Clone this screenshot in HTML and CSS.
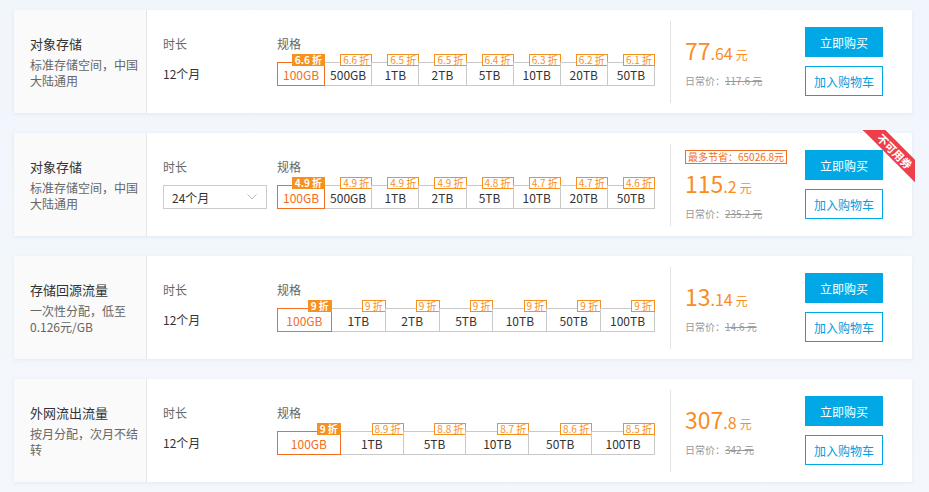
FILE: index.html
```html
<!DOCTYPE html>
<html lang="zh-CN">
<head>
    <meta charset="UTF-8">
    <meta name="viewport" content="width=device-width, initial-scale=1.0">
    <title>存储资源包</title>
    <link rel="stylesheet" href="styles.css">
</head>
<body>

    <div class="list">

        <!-- 对象存储 12个月 -->
        <div class="card">
            <div class="intro">
                <div class="intro-title">对象存储</div>
                <div class="intro-desc">标准存储空间，中国大陆通用</div>
            </div>
            <div class="field duration">
                <div class="field-label">时长</div>
                <div class="duration-value">12个月</div>
            </div>
            <div class="field spec">
                <div class="field-label">规格</div>
                <div class="spec-row">
                    <div class="spec-item active"><span class="tag">6.6 折</span>100GB</div>
                    <div class="spec-item"><span class="tag">6.6 折</span>500GB</div>
                    <div class="spec-item"><span class="tag">6.5 折</span>1TB</div>
                    <div class="spec-item"><span class="tag">6.5 折</span>2TB</div>
                    <div class="spec-item"><span class="tag">6.4 折</span>5TB</div>
                    <div class="spec-item"><span class="tag">6.3 折</span>10TB</div>
                    <div class="spec-item"><span class="tag">6.2 折</span>20TB</div>
                    <div class="spec-item"><span class="tag">6.1 折</span>50TB</div>
                </div>
            </div>
            <div class="price">
                <div class="price-now"><span class="int">77</span><span class="dec">.64</span><span class="unit">元</span></div>
                <div class="price-old">日常价：<s>117.6 元</s></div>
            </div>
            <div class="actions">
                <button class="btn btn-buy">立即购买</button>
                <button class="btn btn-cart">加入购物车</button>
            </div>
        </div>

        <!-- 对象存储 24个月 -->
        <div class="card">
            <div class="intro">
                <div class="intro-title">对象存储</div>
                <div class="intro-desc">标准存储空间，中国大陆通用</div>
            </div>
            <div class="field duration">
                <div class="field-label">时长</div>
                <div class="select">
                    <span>24个月</span>
                    <svg width="10" height="6" viewBox="0 0 10 6"><path d="M0.5 0.5 L5 5 L9.5 0.5" fill="none" stroke="#bbb" stroke-width="1"/></svg>
                </div>
            </div>
            <div class="field spec">
                <div class="field-label">规格</div>
                <div class="spec-row">
                    <div class="spec-item active"><span class="tag">4.9 折</span>100GB</div>
                    <div class="spec-item"><span class="tag">4.9 折</span>500GB</div>
                    <div class="spec-item"><span class="tag">4.9 折</span>1TB</div>
                    <div class="spec-item"><span class="tag">4.9 折</span>2TB</div>
                    <div class="spec-item"><span class="tag">4.8 折</span>5TB</div>
                    <div class="spec-item"><span class="tag">4.7 折</span>10TB</div>
                    <div class="spec-item"><span class="tag">4.7 折</span>20TB</div>
                    <div class="spec-item"><span class="tag">4.6 折</span>50TB</div>
                </div>
            </div>
            <div class="price">
                <div class="save">最多节省：65026.8元</div>
                <div class="price-now"><span class="int">115</span><span class="dec">.2</span><span class="unit">元</span></div>
                <div class="price-old">日常价：<s>235.2 元</s></div>
            </div>
            <div class="actions">
                <button class="btn btn-buy">立即购买</button>
                <button class="btn btn-cart">加入购物车</button>
            </div>
            <div class="ribbon-wrap"><div class="ribbon">不可用券</div></div>
        </div>

        <!-- 存储回源流量 -->
        <div class="card">
            <div class="intro">
                <div class="intro-title">存储回源流量</div>
                <div class="intro-desc">一次性分配，低至0.126元/GB</div>
            </div>
            <div class="field duration">
                <div class="field-label">时长</div>
                <div class="duration-value">12个月</div>
            </div>
            <div class="field spec">
                <div class="field-label">规格</div>
                <div class="spec-row">
                    <div class="spec-item active"><span class="tag">9 折</span>100GB</div>
                    <div class="spec-item"><span class="tag">9 折</span>1TB</div>
                    <div class="spec-item"><span class="tag">9 折</span>2TB</div>
                    <div class="spec-item"><span class="tag">9 折</span>5TB</div>
                    <div class="spec-item"><span class="tag">9 折</span>10TB</div>
                    <div class="spec-item"><span class="tag">9 折</span>50TB</div>
                    <div class="spec-item"><span class="tag">9 折</span>100TB</div>
                </div>
            </div>
            <div class="price">
                <div class="price-now"><span class="int">13</span><span class="dec">.14</span><span class="unit">元</span></div>
                <div class="price-old">日常价：<s>14.6 元</s></div>
            </div>
            <div class="actions">
                <button class="btn btn-buy">立即购买</button>
                <button class="btn btn-cart">加入购物车</button>
            </div>
        </div>

        <!-- 外网流出流量 -->
        <div class="card">
            <div class="intro">
                <div class="intro-title">外网流出流量</div>
                <div class="intro-desc">按月分配，次月不结转</div>
            </div>
            <div class="field duration">
                <div class="field-label">时长</div>
                <div class="duration-value">12个月</div>
            </div>
            <div class="field spec">
                <div class="field-label">规格</div>
                <div class="spec-row">
                    <div class="spec-item active"><span class="tag">9 折</span>100GB</div>
                    <div class="spec-item"><span class="tag">8.9 折</span>1TB</div>
                    <div class="spec-item"><span class="tag">8.8 折</span>5TB</div>
                    <div class="spec-item"><span class="tag">8.7 折</span>10TB</div>
                    <div class="spec-item"><span class="tag">8.6 折</span>50TB</div>
                    <div class="spec-item"><span class="tag">8.5 折</span>100TB</div>
                </div>
            </div>
            <div class="price">
                <div class="price-now"><span class="int">307</span><span class="dec">.8</span><span class="unit">元</span></div>
                <div class="price-old">日常价：<s>342 元</s></div>
            </div>
            <div class="actions">
                <button class="btn btn-buy">立即购买</button>
                <button class="btn btn-cart">加入购物车</button>
            </div>
        </div>

    </div>

</body>
</html>
```

FILE: styles.css
```css
body {
    font-family: "Noto Sans CJK SC", "Noto Sans", sans-serif;
    margin: 0;
    background: linear-gradient(180deg, #f1f6fc 0%, #f4f8fd 100%);
    color: #333;
    min-height: 492px;
}
.list {
    display: flex;
    flex-direction: column;
    gap: 20px;
    padding: 10px 17px 10px 14px;
}
.card {
    position: relative;
    display: flex;
    height: 103px;
    background: #fff;
    box-shadow: 0 1px 4px rgba(40, 70, 120, 0.08);
}
.intro {
    width: 133px;
    flex-shrink: 0;
    box-sizing: border-box;
    padding: 0 8px 0 16px;
    background: #fafafa;
    border-right: 1px solid #e6e6e6;
    display: flex;
    flex-direction: column;
    justify-content: center;
}
.intro-title {
    font-size: 13px;
    line-height: 18px;
    color: #333;
    margin-bottom: 4px;
}
.intro-desc {
    font-size: 12px;
    line-height: 16px;
    color: #666;
}
.field {
    padding-top: 26px;
    flex-shrink: 0;
}
.field-label {
    font-size: 12px;
    line-height: 16px;
    color: #666;
    margin-bottom: 10px;
}
.duration {
    width: 114px;
    margin-left: 16px;
}
.duration-value {
    font-size: 12px;
    line-height: 24px;
    color: #333;
}
.select {
    width: 104px;
    height: 24px;
    box-sizing: border-box;
    border: 1px solid #ccc;
    display: flex;
    align-items: center;
    justify-content: space-between;
    padding: 0 9px 0 8px;
    font-size: 12px;
    color: #333;
}
.spec {
    width: 378px;
}
.spec-row {
    display: flex;
}
.spec-item {
    position: relative;
    flex: 1;
    height: 24px;
    box-sizing: border-box;
    border: 1px solid #c9c9c9;
    margin-left: -1px;
    padding-top: 5px;
    font-size: 12px;
    line-height: 13px;
    text-align: center;
    color: #333;
    background: #fff;
}
.spec-item:first-child {
    margin-left: 0;
}
.spec-item.active {
    border-color: #f36c21;
    color: #f36c21;
    z-index: 1;
}
.tag {
    position: absolute;
    top: -9px;
    right: -1px;
    height: 12px;
    box-sizing: border-box;
    padding: 0 2px;
    border: 1px solid #f7901e;
    background: #fff;
    color: #f7901e;
    font-size: 10px;
    line-height: 10px;
    white-space: nowrap;
}
.active .tag {
    background: #f7901e;
    color: #fff;
    font-weight: bold;
}
.price {
    margin: 11px 0 10px 15px;
    width: 135px;
    flex-shrink: 0;
    box-sizing: border-box;
    border-left: 1px solid #e3e3e3;
    padding-left: 14px;
    display: flex;
    flex-direction: column;
    justify-content: center;
    align-items: flex-start;
}
.save {
    font-size: 10px;
    line-height: 12px;
    color: #f36c21;
    border: 1px solid #f36c21;
    padding: 0 2px;
    margin-bottom: 6px;
}
.price-now {
    color: #fa8c24;
    line-height: 26px;
}
.price-now .int {
    font-size: 23px;
}
.price-now .dec {
    font-size: 16px;
}
.price-now .unit {
    font-size: 12px;
    margin-left: 3px;
}
.price-old {
    font-size: 10px;
    line-height: 14px;
    color: #999;
    margin-top: 6px;
}
.price-old s {
    color: #999;
}
.actions {
    display: flex;
    flex-direction: column;
    justify-content: center;
    gap: 9px;
    width: 78px;
    flex-shrink: 0;
}
.btn {
    width: 78px;
    height: 30px;
    box-sizing: border-box;
    border: 1px solid #00a9e6;
    font-family: inherit;
    font-size: 12px;
    cursor: pointer;
    padding: 0;
}
.btn-buy {
    background: #00a9e6;
    color: #fff;
}
.btn-cart {
    background: #fff;
    color: #00a0e0;
}
.ribbon-wrap {
    position: absolute;
    top: -3px;
    right: -3px;
    width: 52px;
    height: 52px;
    overflow: hidden;
}
.ribbon {
    position: absolute;
    left: -6px;
    top: 13px;
    width: 76px;
    height: 16px;
    background: #ef3e4a;
    color: #fff;
    font-size: 11px;
    font-weight: bold;
    line-height: 16px;
    text-align: center;
    transform: rotate(45deg);
}
```
